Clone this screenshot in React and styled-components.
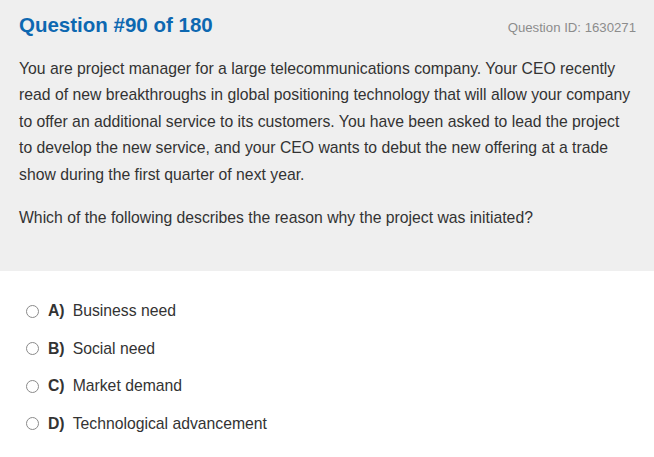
import React from "react";
import styled, { createGlobalStyle } from "styled-components";

const Global = createGlobalStyle`
  html, body { margin: 0; padding: 0; background: #ffffff; }
  body { font-family: "Liberation Sans", Arial, sans-serif; }
`;

const Page = styled.div`
  width: 654px;
  min-height: 457px;
  background: #ffffff;
`;

const QuestionPanel = styled.section`
  background: #efefef;
  height: 271px;
  box-sizing: border-box;
  padding: 11.5px 20px 0 19px;
`;

const Header = styled.div`
  display: flex;
  justify-content: space-between;
  align-items: baseline;
  margin-bottom: 18px;
`;

const Title = styled.h1`
  margin: 0;
  font-size: 20.5px;
  font-weight: bold;
  color: #0d68b1;
  line-height: 26px;
`;

const QuestionId = styled.span`
  font-size: 13.2px;
  color: #8c8c8c;
  margin-right: -2px;
`;

const Paragraph = styled.p`
  margin: 0 0 ${(p) => p.$gap || 0}px 0;
  font-size: 15.75px;
  line-height: 26.5px;
  color: #333333;
`;

const Options = styled.ul`
  list-style: none;
  margin: 0;
  padding: 28px 0 0 26px;
  display: flex;
  flex-direction: column;
  gap: 13px;
`;

const Option = styled.li`
  display: flex;
  align-items: center;
  height: 24.5px;
  font-size: 15.75px;
  color: #333333;
`;

const Radio = styled.span`
  width: 13px;
  height: 13px;
  box-sizing: border-box;
  border: 1px solid #8a8a8a;
  border-radius: 50%;
  background: #ffffff;
  margin-right: 9px;
  flex-shrink: 0;
`;

const Letter = styled.b`
  font-weight: bold;
  margin-right: 8px;
`;

const options = [
  ["A)", "Business need"],
  ["B)", "Social need"],
  ["C)", "Market demand"],
  ["D)", "Technological advancement"],
];

export default function App() {
  return (
    <Page>
      <Global />
      <QuestionPanel>
        <Header>
          <Title>Question #90 of 180</Title>
          <QuestionId>Question ID: 1630271</QuestionId>
        </Header>
        <Paragraph $gap={17}>
          You are project manager for a large telecommunications company. Your CEO recently
          read of new breakthroughs in global positioning technology that will allow your company
          to offer an additional service to its customers. You have been asked to lead the project
          to develop the new service, and your CEO wants to debut the new offering at a trade
          show during the first quarter of next year.
        </Paragraph>
        <Paragraph>Which of the following describes the reason why the project was initiated?</Paragraph>
      </QuestionPanel>
      <Options>
        {options.map(([l, t]) => (
          <Option key={l}>
            <Radio />
            <Letter>{l}</Letter>
            {t}
          </Option>
        ))}
      </Options>
    </Page>
  );
}
